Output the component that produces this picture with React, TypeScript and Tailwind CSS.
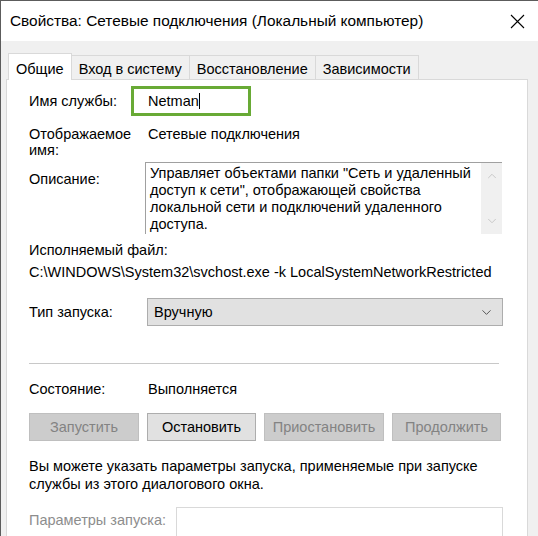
import { ChevronDown, ChevronUp } from 'lucide-react';

const FONT = { fontFamily: '"Liberation Sans", Arial, sans-serif' };

const Tab = ({ label, active = false }: { label: string; active?: boolean }) => (
    <div
        className={
            active
                ? 'relative z-10 -mb-px h-[27px] px-[7px] pt-[5px] bg-white border border-b-0 border-[#d9d9d9] text-black'
                : 'h-[24px] px-[7px] pt-[3px] bg-[#f0f0f0] border border-b-0 border-l-0 border-[#d9d9d9] text-black'
        }
    >
        {label}
    </div>
);

const Btn = ({ label, enabled = false }: { label: string; enabled?: boolean }) => (
    <div
        className={
            enabled
                ? 'h-[28px] flex items-center justify-center border border-[#adadad] bg-[#e1e1e1] text-black'
                : 'h-[28px] flex items-center justify-center border border-[#bfbfbf] bg-[#cccccc] text-[#838383]'
        }
    >
        {label}
    </div>
);

export default function App() {
    return (
        <div className="w-[538px] h-[536px] overflow-hidden border-t border-l border-[#5c5c5c] bg-[#f0f0f0] text-[14.5px] text-black" style={FONT}>
            {/* заголовок окна */}
            <div className="h-[40px] bg-white flex items-center pl-[9px] pr-[13px]">
                <span className="flex-1 text-[15.4px]">Свойства: Сетевые подключения (Локальный компьютер)</span>
                <svg width="15" height="15" viewBox="0 0 15 15" className="mt-[1px]">
                    <path d="M1 1 L14 14 M14 1 L1 14" stroke="#000" strokeWidth="1.1" fill="none" />
                </svg>
            </div>

            <div className="pt-[11px] pl-[5px]">
                {/* вкладки */}
                <div className="flex items-end pl-[2px] h-[27px]">
                    <Tab label="Общие" active />
                    <Tab label="Вход в систему" />
                    <Tab label="Восстановление" />
                    <Tab label="Зависимости" />
                </div>

                <div className="w-[522px] h-[460px] bg-white border border-[#d9d9d9] pl-[22px] leading-[17px]">
                    {/* имя службы */}
                    <div className="mt-[6px] h-[30px] flex items-center">
                        <span className="w-[102px]">Имя службы:</span>
                        <div className="w-[120px] h-[30px] border-[3px] border-[#68aa35] flex items-center pl-[14px]">
                            <span>Netman</span>
                            <span className="w-px h-[16px] bg-black" />
                        </div>
                    </div>

                    {/* отображаемое имя */}
                    <div className="mt-[10px] flex leading-[16px]">
                        <span className="w-[119px]">Отображаемое<br />имя:</span>
                        <span>Сетевые подключения</span>
                    </div>

                    {/* описание */}
                    <div className="mt-[4px] flex">
                        <span className="w-[116px] mt-[9px]">Описание:</span>
                        <div className="w-[357px] h-[72px] flex border-t border-l border-[#a0a0a0] bg-white">
                            <p className="flex-1 pl-[4px] pt-[2px]">
                                Управляет объектами папки "Сеть и удаленный доступ к сети", отображающей свойства локальной сети и подключений удаленного доступа.
                            </p>
                            <div className="w-[21px] bg-[#f0f0f0] flex flex-col items-center justify-between py-[6px]">
                                <ChevronUp size={14} strokeWidth={1.5} className="text-[#c2c2c2]" />
                                <ChevronDown size={14} strokeWidth={1.5} className="text-[#c2c2c2]" />
                            </div>
                        </div>
                    </div>

                    {/* исполняемый файл */}
                    <div className="mt-[8px]">Исполняемый файл:</div>
                    <div className="mt-[5px] whitespace-nowrap">C:\WINDOWS\System32\svchost.exe -k LocalSystemNetworkRestricted</div>

                    {/* тип запуска */}
                    <div className="mt-[17px] flex items-center">
                        <span className="w-[118px]">Тип запуска:</span>
                        <div className="w-[356px] h-[28px] bg-[#e1e1e1] border border-[#adadad] flex items-center pl-[6px] pr-[8px]">
                            <span className="flex-1">Вручную</span>
                            <ChevronDown size={15} strokeWidth={1.4} className="text-[#444]" />
                        </div>
                    </div>

                    <div className="mt-[37px] w-[470px] h-px bg-[#c8c8c8]" />

                    {/* состояние */}
                    <div className="mt-[17px] flex">
                        <span className="w-[119px]">Состояние:</span>
                        <span>Выполняется</span>
                    </div>

                    <div className="mt-[15px] grid grid-cols-[110px_109px_120px_109px] gap-x-[8px]">
                        <Btn label="Запустить" />
                        <Btn label="Остановить" enabled />
                        <Btn label="Приостановить" />
                        <Btn label="Продолжить" />
                    </div>

                    <p className="mt-[16px] w-[470px] leading-[18px]">
                        Вы можете указать параметры запуска, применяемые при запуске службы из этого диалогового окна.
                    </p>

                    {/* параметры запуска */}
                    <div className="mt-[14px] flex items-start">
                        <span className="w-[147px] mt-[5px] text-[#8d8d8d]">Параметры запуска:</span>
                        <div className="w-[327px] h-[32px] border border-[#d9d9d9] bg-white" />
                    </div>
                </div>
            </div>
        </div>
    );
}
